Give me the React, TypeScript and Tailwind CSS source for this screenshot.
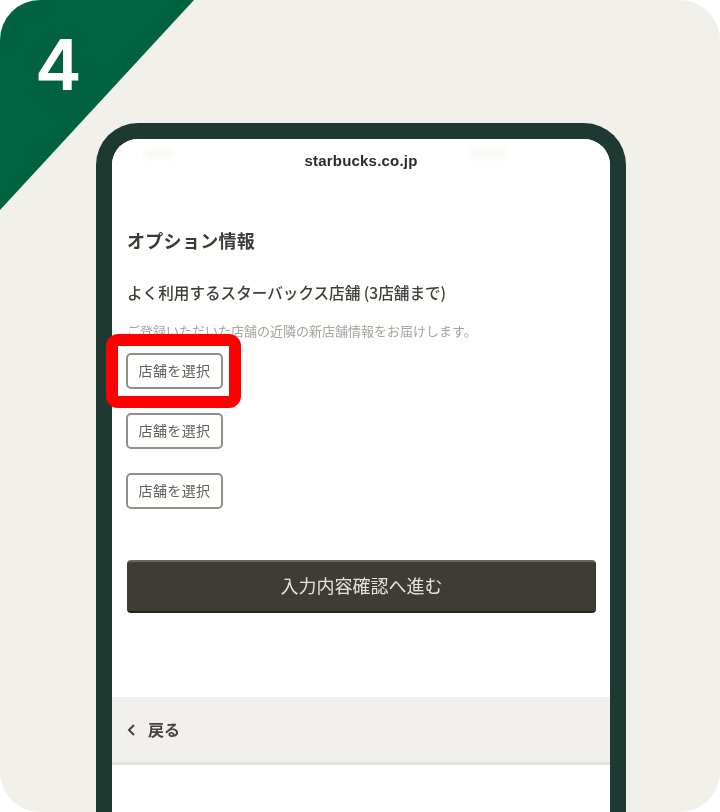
const jp = '"Noto Sans CJK JP", "Noto Sans", sans-serif';

function StoreButton() {
  return (
    <div className="-ml-px flex h-[36px] w-[97px] items-center justify-center rounded-[5px] border-2 border-[#8f8f8c] bg-white pb-[2px] blur-[0.5px]">
      <span className="text-[14px] tracking-[0.4px] text-[#625f5b] blur-[0.3px]">店舗を選択</span>
    </div>
  );
}

export default function App() {
  return (
    <div className="h-[812px] w-[720px] overflow-hidden bg-white" style={{ fontFamily: jp }}>
      <div className="relative h-[812px] w-[720px] overflow-hidden rounded-[40px] bg-[#f1f0eb] pl-[96px] pt-[123px]">
        <svg className="absolute left-0 top-0" width="195" height="211" viewBox="0 0 195 211">
          <polygon points="0,0 194,0 0,210" fill="#006241" />
        </svg>
        <div
          className="absolute left-[35px] top-[27px] text-[70px] font-semibold leading-[76px] text-white"
          style={{ fontFamily: 'Inter, sans-serif' }}
        >
          4
        </div>

        <div className="relative h-[689px] w-[530px] rounded-t-[42px] border-x-[16px] border-t-[16px] border-[#1e3932] bg-white">
          <div className="relative h-[673px] overflow-hidden rounded-t-[26px] bg-white">
            <div className="absolute left-[32px] top-[10px] h-[9px] w-[30px] rounded-full bg-[#f8f8f7] blur-[3px]" />
            <div className="absolute right-[104px] top-[10px] h-[9px] w-[36px] rounded-full bg-[#f8f8f7] blur-[3px]" />
            <div
              className="pt-[12px] text-center text-[15px] font-bold leading-[20px] tracking-[0.2px] text-[#2c2c2c] blur-[0.5px]"
              style={{ fontFamily: '"Liberation Sans", sans-serif' }}
            >
              starbucks.co.jp
            </div>

            <div className="px-[15px] pt-[56px]">
              <div className="text-[18px] font-bold leading-[26px] tracking-[0.3px] text-[#3b3a37] blur-[0.6px]">オプション情報</div>
              <div className="mt-[27px] text-[15.6px] font-medium leading-[24px] text-[#3f3e3a] blur-[0.6px]">
                よく利用するスターバックス店舗 (3店舗まで)
              </div>
              <div className="mt-[18px] text-[13px] leading-[18px] text-[#a5a4a1] blur-[0.6px]">
                ご登録いただいた店舗の近隣の新店舗情報をお届けします。
              </div>
              <div className="mt-[13px] flex flex-col gap-[24px]">
                <StoreButton />
                <StoreButton />
                <StoreButton />
              </div>
              <div className="mt-[51px] flex h-[53px] w-[469px] items-center justify-center rounded-[4px] border-y-2 border-t-[#6b675f] border-b-[#26231f] bg-[#3f3b35] pb-[2px] text-[18px] text-[#e4e3e0] blur-[0.5px]">
                入力内容確認へ進む
              </div>
            </div>

            <div className="mt-[84px] flex h-[68px] items-center gap-[12px] border-b-[3px] border-[#e3e1dc] bg-[#f2f0ed] pl-[15px]">
              <svg width="9" height="16" viewBox="0 0 9 16" fill="none">
                <path d="M7 3 L2 8 L7 13" stroke="#45433f" strokeWidth="2" />
              </svg>
              <span className="pb-[2px] text-[16px] font-bold text-[#45433f] blur-[0.5px]">戻る</span>
            </div>
          </div>
        </div>

        <div className="absolute left-[106px] top-[334px] h-[74px] w-[135px] rounded-[12px] border-[12px] border-[#ff0000]" />
      </div>
    </div>
  );
}
